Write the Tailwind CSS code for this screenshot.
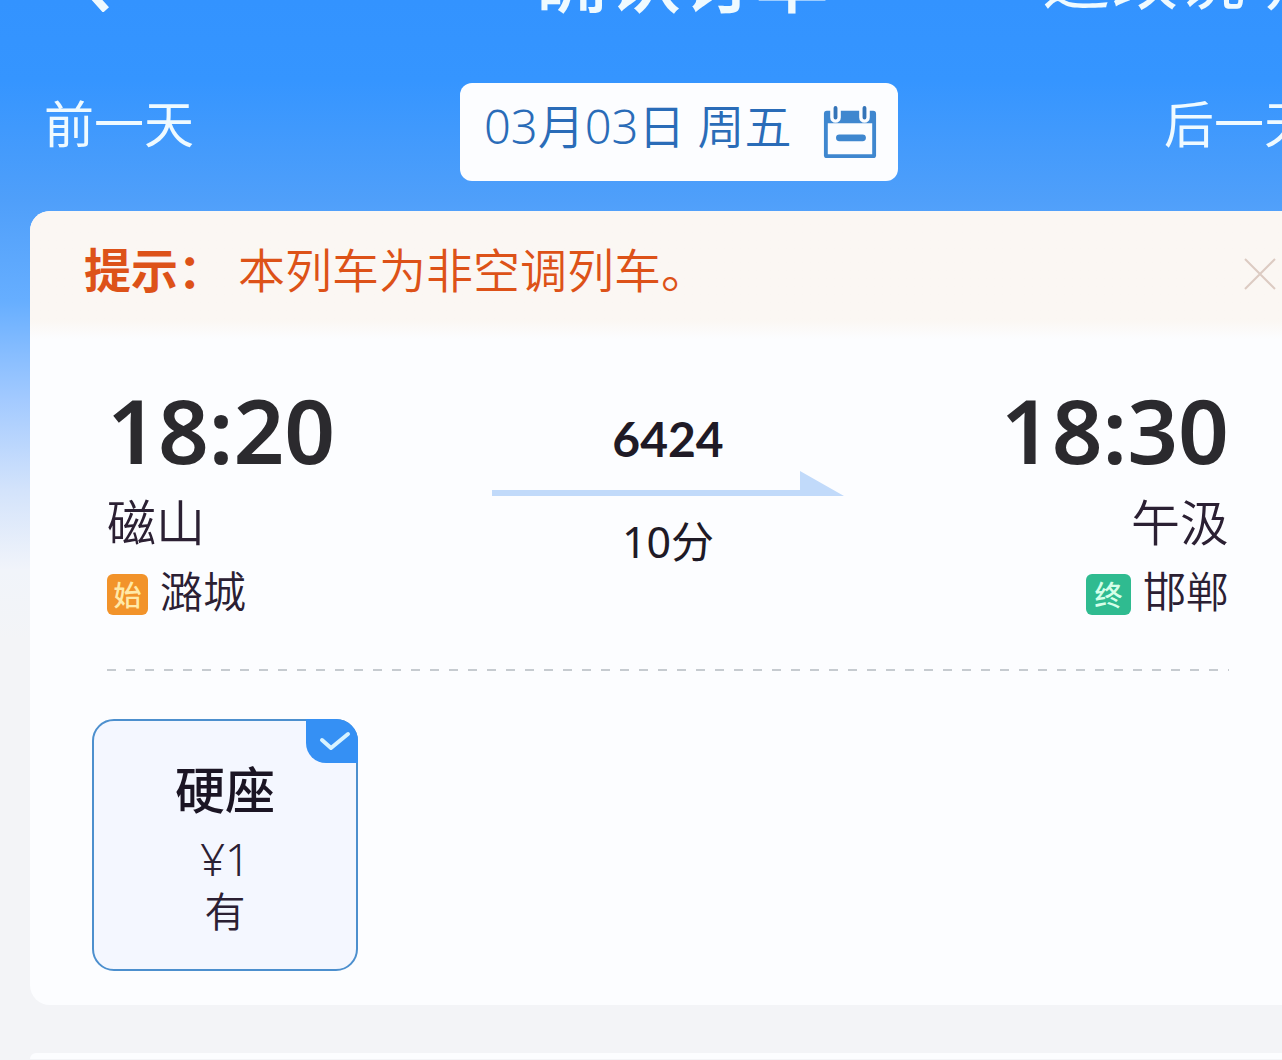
<!DOCTYPE html>
<html lang="zh-CN">
<head>
    <meta charset="UTF-8">
    <meta name="viewport" content="width=device-width, initial-scale=1.0">
    <title>确认订单</title>

    <!-- Tailwind CSS -->
    <script src="https://cdn.jsdelivr.net/npm/@tailwindcss/browser@4"></script>
</head>

<body class="overflow-hidden bg-[#f3f4f7] font-['Noto_Sans','Noto_Sans_CJK_SC',sans-serif] leading-none text-[#2b2033]">
    <div class="-mr-20 min-h-screen bg-[linear-gradient(180deg,#3393ff_0px,#3595ff_80px,#4f9ffa_200px,#66aeff_300px,#a3caff_400px,#d3e3fb_490px,#f1f4fa_570px,#f3f4f7_640px)]">
        <!-- TOP BAR -->
        <header class="flex h-5 items-end justify-between overflow-hidden pr-12 pl-16 text-[#effaff]">
            <a href="#" class="mb-2 w-64" aria-label="返回">
                <svg width="48" height="80" viewBox="0 0 48 80" fill="none" stroke="currentColor" stroke-width="8"><path d="M42 2L8 40L42 78"/></svg>
            </a>
            <h1 class="mb-1 text-[74px] font-medium">确认订单</h1>
            <a href="#" class="mb-2 text-[68px]">退改说明</a>
        </header>

        <!-- DATE SWITCH -->
        <nav class="mt-[63px] flex items-start justify-between pr-12 pl-11 text-[50px] text-[#effaff]">
            <button type="button" class="mt-4">前一天</button>
            <button type="button" class="flex h-[98px] w-[438px] items-start justify-between rounded-xl bg-[#fcfdff] py-5 pr-5 pl-6 text-[47px] font-[350] text-[#2a6cb8]">
                <span>03月03日 周五</span>
                <svg class="mt-0.5" width="56" height="56" viewBox="0 0 58 56" fill="none">
                    <path d="M2 8a3 3 0 0 1 3-3h48a3 3 0 0 1 3 3v43a3 3 0 0 1-3 3H5a3 3 0 0 1-3-3z" fill="#3f87cf"/>
                    <path d="M6 18h46v32H6z" fill="#fcfdff"/>
                    <path d="M14 0v12M44 0v12" stroke="#fcfdff" stroke-width="11" stroke-linecap="round"/>
                    <path d="M14 2v10M44 2v10" stroke="#3474b8" stroke-width="4" stroke-linecap="round"/>
                    <path d="M18 33h24" stroke="#3f87cf" stroke-width="7" stroke-linecap="round"/>
                </svg>
            </button>
            <button type="button" class="mt-4">后一天</button>
        </nav>

        <!-- TRAIN CARD -->
        <main class="mt-[30px] mr-8 ml-[30px] overflow-hidden rounded-[20px] bg-[#fcfdff] pb-[34px]">
            <div class="flex h-32 items-start justify-between bg-linear-to-b from-[#fbf7f3] from-85% to-[#fcfdff] pt-9 pr-[53px] pl-[54px] text-[47px] text-[#dd5218]">
                <p class="flex"><strong class="w-[154px] font-bold whitespace-nowrap">提示：</strong><span class="font-[350]">本列车为非空调列车。</span></p>
                <button type="button" class="mt-2.5" aria-label="关闭">
                    <svg width="34" height="34" viewBox="0 0 34 34" fill="none" stroke="#dccbc2" stroke-width="2"><path d="M2 2L32 32M32 2L2 32"/></svg>
                </button>
            </div>

            <div class="mr-[101px] ml-[77px]">
                <section class="flex items-start justify-between pt-[46px]">
                    <div>
                        <div class="text-[89px] font-semibold text-[#2b2a2e]">18:20</div>
                        <div class="mt-6 text-[49px] font-[350]">磁山</div>
                        <div class="mt-[23px] flex items-start gap-3 text-[43px] font-[350]">
                            <span class="mt-1 flex size-[41px] items-center justify-center rounded-md bg-[#f2932a] text-[28px] font-medium text-[#ffe9a8]">始</span>
                            <span>潞城</span>
                        </div>
                    </div>
                    <div class="flex flex-col items-center pt-[30px] text-[#1f1a26]">
                        <div class="font-[Lato] text-[48px] font-bold">6424</div>
                        <svg class="mt-2" width="352" height="25" viewBox="0 0 352 25" fill="#c1dafa"><path d="M0 19h308V0l44 25H0z"/></svg>
                        <div class="mt-6 text-[43px]">10分</div>
                    </div>
                    <div class="flex flex-col items-end">
                        <div class="text-[89px] font-semibold text-[#2b2a2e]">18:30</div>
                        <div class="mt-6 text-[49px] font-[350]">午汲</div>
                        <div class="mt-[23px] flex items-start gap-3 text-[43px] font-[350]">
                            <span class="mt-1 flex h-[41px] w-[45px] items-center justify-center rounded-md bg-[#2fbb90] text-[28px] font-medium text-[#d5ffe9]">终</span>
                            <span>邯郸</span>
                        </div>
                    </div>
                </section>

                <svg class="mt-[54px] h-[2px] w-full" stroke="#c6cbd0" stroke-width="2" stroke-dasharray="9 10"><path d="M0 1H4000"/></svg>

                <label class="relative mt-12 -ml-[15px] flex h-[252px] w-[266px] flex-col items-center rounded-[22px] border-2 border-[#4c8fce] bg-[#f4f7ff] pt-11">
                    <input type="radio" name="seat" class="sr-only" checked>
                    <span class="text-[50px] font-medium text-[#1b1524]">硬座</span>
                    <span class="mt-[22px] text-[44px] font-light">¥1</span>
                    <span class="mt-2.5 text-[41px] font-[350]">有</span>
                    <svg class="absolute -top-0.5 -right-0.5" width="52" height="44" viewBox="0 0 52 44" fill="none">
                        <path d="M0 0h30a22 22 0 0 1 22 22v22H20A20 20 0 0 1 0 24z" fill="#3590f4"/>
                        <path d="M16 21l9 8L42 15" stroke="#d8f3ff" stroke-width="4" stroke-linecap="round" stroke-linejoin="round"/>
                    </svg>
                </label>
            </div>
        </main>

        <!-- PASSENGER CARD -->
        <section class="mt-12 mr-8 ml-[30px] h-1.5 rounded-t-[20px] bg-[#fcfdff]"></section>
    </div>
</body>
</html>
